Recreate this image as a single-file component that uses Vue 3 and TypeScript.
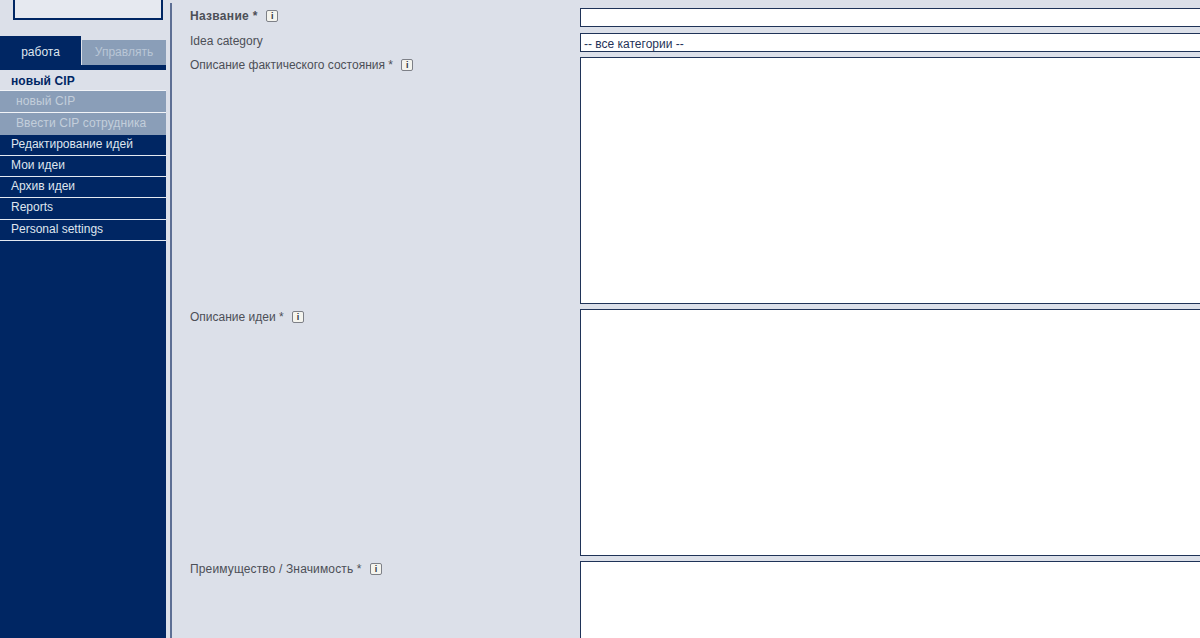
<template>
    <div class="page">
        <aside class="sidebar">
            <div class="logo-box"></div>
            <div class="tabs">
                <div class="tab active">работа</div>
                <div class="tab">Управлять</div>
            </div>
            <nav class="menu">
                <div class="menu-title">новый CIP</div>
                <a v-for="item in subItems" :key="item" class="sub-item">{{ item }}</a>
                <a v-for="item in mainItems" :key="item" class="main-item">{{ item }}</a>
            </nav>
        </aside>

        <main class="content">
            <div v-for="field in fields" :key="field.label" class="row" :class="field.kind">
                <label class="label" :class="{ strong: field.strong, wide: field.wide }">
                    {{ field.label }}
                    <span v-if="field.info" class="info">i</span>
                </label>
                <input v-if="field.kind === 'text'" class="control" type="text" />
                <div v-else-if="field.kind === 'select'" class="control select">-- все категории --</div>
                <textarea v-else class="control area"></textarea>
            </div>
        </main>
    </div>
</template>

<script setup lang="ts">
interface Field {
    label: string;
    kind: 'text' | 'select' | 'area';
    info: boolean;
    strong?: boolean;
    wide?: boolean;
}

const subItems: string[] = ['новый CIP', 'Ввести CIP сотрудника'];
const mainItems: string[] = ['Редактирование идей', 'Мои идеи', 'Архив идеи', 'Reports', 'Personal settings'];

const fields: Field[] = [
    { label: 'Название *', kind: 'text', info: true, strong: true },
    { label: 'Idea category', kind: 'select', info: false },
    { label: 'Описание фактического состояния *', kind: 'area', info: true },
    { label: 'Описание идеи *', kind: 'area', info: true },
    { label: 'Преимущество / Значимость *', kind: 'area', info: true, wide: true },
];
</script>

<style>
html,
body {
    margin: 0;
    overflow: hidden;
    background: #dce0e9;
}
</style>

<style scoped>
.page {
    display: flex;
    width: 1200px;
    height: 638px;
    overflow: hidden;
    background: #dce0e9;
    font-family: "Liberation Sans", Arial, sans-serif;
    font-size: 12px;
}

.sidebar {
    flex: 0 0 166px;
    display: flex;
    flex-direction: column;
    height: 638px;
}

.logo-box {
    box-sizing: border-box;
    width: 150px;
    height: 20px;
    margin-left: 13px;
    border: 2px solid #002663;
    border-top: 0;
    background: #e6e9f0;
}

.tabs {
    display: flex;
    align-items: flex-end;
    gap: 1px;
    height: 29px;
    margin-top: 16px;
}

.tab {
    flex: 0 0 84px;
    height: 25px;
    line-height: 25px;
    text-align: center;
    background: #8a9eb8;
    color: #b9c6d6;
}

.tab.active {
    flex: 0 0 81px;
    height: 29px;
    line-height: 32px;
    background: #002663;
    color: #dfe5ee;
}

.menu {
    flex: 1;
    display: flex;
    flex-direction: column;
    border-top: 5px solid #002663;
    background: #002663;
}

.menu-title {
    height: 20px;
    line-height: 22px;
    padding-left: 11px;
    background: #dce0e9;
    color: #002663;
    font-size: 12px;
    font-weight: bold;
    letter-spacing: 0.1px;
}

.sub-item {
    box-sizing: border-box;
    height: 22.3px;
    line-height: 21.5px;
    padding-left: 16px;
    border-top: 1px solid #f2f4f8;
    background: #8a9eb8;
    color: #c3cedb;
    letter-spacing: 0.1px;
}

.main-item {
    box-sizing: border-box;
    height: 21.25px;
    line-height: 19.5px;
    padding-left: 11px;
    border-bottom: 1px solid #e4e9f1;
    background: #002663;
    color: #dfe5ee;
}

.content {
    flex: 1;
    min-width: 0;
    margin: 3px 0 0 4px;
    padding: 5px 0 0 18px;
    border-left: 2px solid #5d6f94;
}

.row {
    display: flex;
    align-items: flex-start;
    width: 1200px;
    margin-bottom: 5px;
}

.row.text {
    margin-bottom: 6px;
}

.label {
    flex: 0 0 390px;
    padding-top: 1px;
    color: #4c4f57;
    line-height: 14px;
}

.label.strong {
    font-weight: bold;
    letter-spacing: 0.3px;
}

.label.wide {
    letter-spacing: 0.14px;
}

.info {
    display: inline-block;
    box-sizing: border-box;
    width: 12px;
    height: 12px;
    margin-left: 5px;
    border: 1px solid #7d8087;
    border-radius: 2px;
    background: #f4f4ee;
    color: #33373e;
    font-size: 9px;
    font-weight: bold;
    letter-spacing: 0;
    line-height: 10px;
    text-align: center;
    vertical-align: 1px;
}

.control {
    display: block;
    box-sizing: border-box;
    flex: 0 0 760px;
    margin: 0;
    padding: 0 3px;
    border: 1px solid #1f3358;
    border-radius: 0;
    outline: 0;
    background: #fff;
    font: inherit;
    color: #1f3358;
}

input.control {
    height: 19px;
}

.select {
    height: 19px;
    line-height: 20px;
}

.area {
    height: 247px;
    resize: none;
}
</style>
